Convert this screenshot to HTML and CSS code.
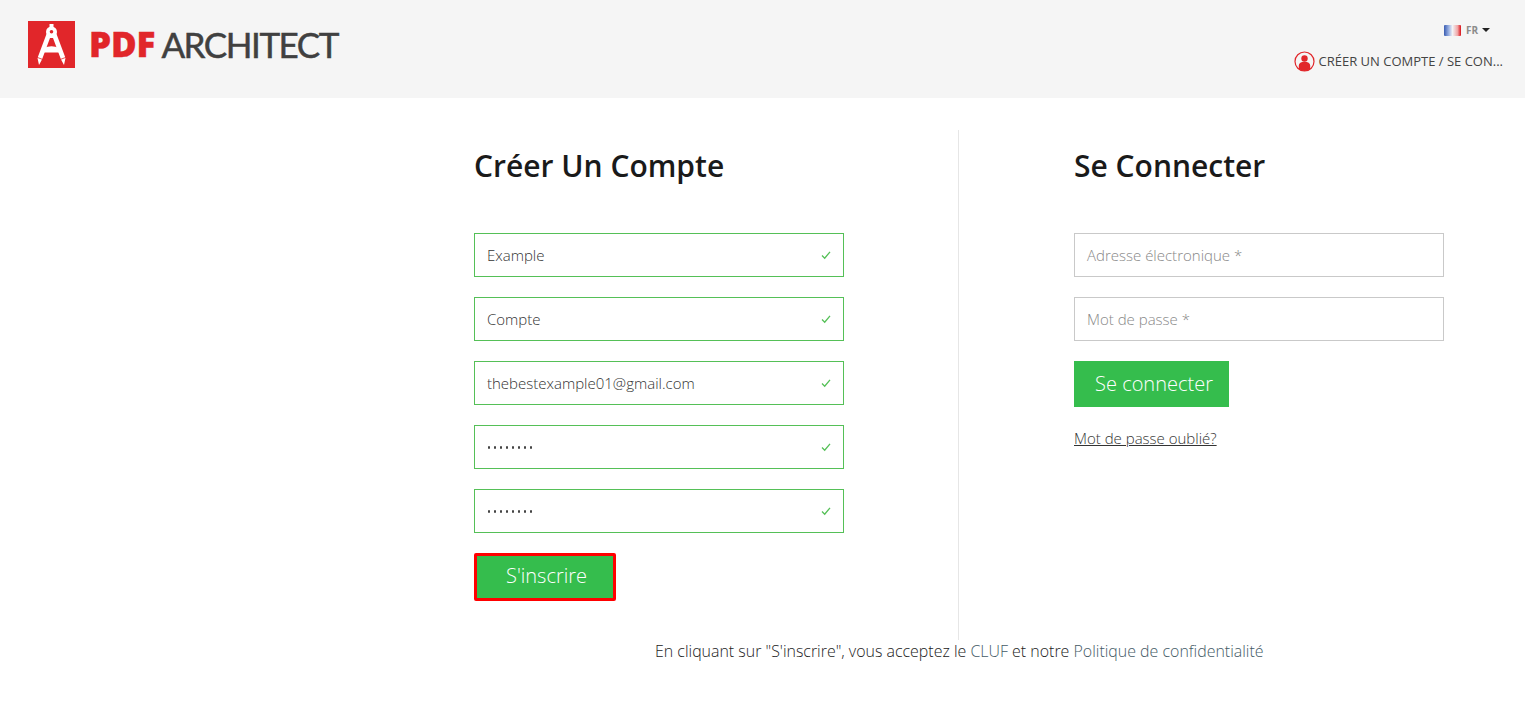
FILE: index.html
```html
<!DOCTYPE html>
<html lang="fr">
<head>
<meta charset="utf-8">
<title>PDF Architect</title>
<link rel="stylesheet" href="styles.css">
</head>
<body>
<header class="header">
  <a class="logo" href="#">
    <svg class="logo-mark" viewBox="0 0 47 47" width="47" height="47" aria-hidden="true">
      <rect width="47" height="47" fill="#e1262a"/>
      <rect x="21.500" y="3" width="4" height="5" fill="#fff"/>
      <path d="M18.500 13L9.500 37l1.500 7 3-5.500L22 17h3l8 21.500 3 5.500 1.500-7-9-24z" fill="#fff"/>
      <circle cx="23.500" cy="11" r="5.500" fill="#fff"/>
      <circle cx="23.500" cy="10.800" r="1.800" fill="#e1262a"/>
      <path d="M16 26.800q7.500-3 15 0l2 4.700H14z" fill="#fff"/>
      <path d="M9 36.300l5.800 2.200M38 36.300l-5.800 2.200" stroke="#e1262a" stroke-width="0.800" fill="none"/>
    </svg>
    <span class="logo-pdf">PDF</span>
    <span class="logo-name">ARCHITECT</span>
  </a>
  <div class="header-right">
    <div class="lang">
      <span class="flag"></span>
      <span class="lang-code">FR</span>
      <span class="caret"></span>
    </div>
    <a class="account" href="#">
      <svg class="account-icon" viewBox="0 0 21 21" width="21" height="21" aria-hidden="true">
        <circle cx="10.500" cy="10.500" r="9.500" fill="none" stroke="#e1262a" stroke-width="1.200"/>
        <circle cx="10.500" cy="7.500" r="3.200" fill="#e1262a"/>
        <path d="M4.800 18v-3.500c0-2.500 2.200-3.800 5.700-3.800s5.700 1.300 5.700 3.800V18a9 9 0 0 1-11.400 0z" fill="#e1262a"/>
      </svg>
      <span class="account-text">CRÉER UN COMPTE / SE CON...</span>
    </a>
  </div>
</header>

<main class="main">
  <section class="col col-left">
    <h1 class="title">Créer Un Compte</h1>
    <form class="form">
      <div class="field valid"><span class="value">Example</span><svg class="check" viewBox="0 0 10 10" width="10" height="10"><path d="M1 5.500l2.700 2.700L9 1.800" fill="none" stroke="#55c057" stroke-width="1.300"/></svg></div>
      <div class="field valid"><span class="value">Compte</span><svg class="check" viewBox="0 0 10 10" width="10" height="10"><path d="M1 5.500l2.700 2.700L9 1.800" fill="none" stroke="#55c057" stroke-width="1.300"/></svg></div>
      <div class="field valid"><span class="value">thebestexample01@gmail.com</span><svg class="check" viewBox="0 0 10 10" width="10" height="10"><path d="M1 5.500l2.700 2.700L9 1.800" fill="none" stroke="#55c057" stroke-width="1.300"/></svg></div>
      <div class="field valid"><span class="dots"><i></i><i></i><i></i><i></i><i></i><i></i><i></i><i></i></span><svg class="check" viewBox="0 0 10 10" width="10" height="10"><path d="M1 5.500l2.700 2.700L9 1.800" fill="none" stroke="#55c057" stroke-width="1.300"/></svg></div>
      <div class="field valid"><span class="dots"><i></i><i></i><i></i><i></i><i></i><i></i><i></i><i></i></span><svg class="check" viewBox="0 0 10 10" width="10" height="10"><path d="M1 5.500l2.700 2.700L9 1.800" fill="none" stroke="#55c057" stroke-width="1.300"/></svg></div>
      <button class="btn btn-focus" type="button">S'inscrire</button>
    </form>
  </section>
  <section class="col col-right">
    <h1 class="title">Se Connecter</h1>
    <form class="form">
      <div class="field"><span class="placeholder">Adresse électronique *</span></div>
      <div class="field"><span class="placeholder">Mot de passe *</span></div>
      <button class="btn btn-login" type="button">Se connecter</button>
      <a class="forgot" href="#">Mot de passe oublié?</a>
    </form>
  </section>
</main>

<p class="legal">En cliquant sur "S'inscrire", vous acceptez le <a href="#">CLUF</a> et notre <a href="#">Politique de confidentialité</a></p>
</body>
</html>
```
FILE: styles.css
```css
* { box-sizing: border-box; }
html, body { margin: 0; padding: 0; }
body {
  background: #fff;
  color: #333;
  font-family: "Open Sans", "Liberation Sans", sans-serif;
  overflow: hidden;
}
a { color: inherit; text-decoration: none; }

.header {
  height: 98px;
  background: #f5f5f5;
  display: flex;
  justify-content: space-between;
  padding: 21px 22px 0 28px;
}
.logo { display: flex; align-items: flex-start; }
.logo-mark { display: block; flex: none; }
.logo-pdf {
  margin: -2px 0 0 14px;
  font: 800 35px/50px "Open Sans", sans-serif;
  color: #e1262a;
  letter-spacing: -0.1px;
  -webkit-text-stroke: 0.4px #e1262a;
}
.logo-name {
  margin: -2px 0 0 6px;
  font: 400 35px/50px Lato, sans-serif;
  color: #404040;
  letter-spacing: -1.45px;
  -webkit-text-stroke: 0.5px #404040;
}
.header-right {
  display: flex;
  flex-direction: column;
  align-items: flex-end;
}
.lang {
  display: flex;
  align-items: center;
  height: 18px;
  padding-right: 13px;
}
.flag {
  width: 17px;
  height: 11px;
  margin-right: 5px;
  border-radius: 1px;
  background: linear-gradient(90deg, #3a5cb0 0, #8fa8de 25%, #f3f3f6 50%, #f0a5a5 80%, #d90f17 100%);
}
.lang-code {
  font-size: 10px;
  font-weight: 700;
  color: #8c8c8c;
  line-height: 18px;
}
.caret {
  width: 0;
  height: 0;
  margin-left: 4px;
  border-left: 4px solid transparent;
  border-right: 4px solid transparent;
  border-top: 4px solid #222;
}
.account {
  display: flex;
  align-items: center;
  margin-top: 11px;
  height: 22px;
}
.account-icon { display: block; margin-right: 4px; }
.account-text { font-size: 13px; color: #444; line-height: 22px; }

.main {
  display: flex;
  margin: 32px 0 0 474px;
  height: 510px;
}
.col-left {
  width: 485px;
  border-right: 1px solid #e6e6e6;
}
.col-right {
  padding-left: 115px;
  width: 485px;
}
.title {
  margin: 16px 0 47px;
  font-size: 30px;
  font-weight: 600;
  line-height: 40px;
  color: #1a1a1a;
}
.form { display: flex; flex-direction: column; align-items: flex-start; }
.field {
  width: 370px;
  height: 44px;
  margin-bottom: 20px;
  padding: 0 12px;
  border: 1px solid #c9c9c9;
  display: flex;
  align-items: center;
  justify-content: space-between;
  font-size: 15px;
  font-weight: 300;
  background: #fff;
}
.field.valid { border-color: #55c057; }
.value { color: #333; }
.placeholder { color: #888; }
.check { display: block; }
.dots { display: flex; gap: 4px; padding-left: 1px; }
.dots i {
  display: block;
  width: 2px;
  height: 3px;
  border-radius: 1px;
  background: #444;
}
.btn {
  border: 0;
  background: #35bd4d;
  color: #fff;
  font-family: inherit;
  font-size: 20px;
  font-weight: 300;
  cursor: pointer;
}
.btn-focus {
  width: 142px;
  height: 48px;
  padding: 0 0 3px 3px;
  border: 3px solid #f00;
  border-radius: 2px;
}
.btn-login {
  width: 155px;
  height: 46px;
  padding: 0 0 2px 5px;
}
.forgot {
  margin-top: 21px;
  font-size: 15px;
  font-weight: 300;
  line-height: 20px;
  color: #333;
  text-decoration: underline;
}
.legal {
  margin: 0 0 0 655px;
  font-size: 15.950px;
  font-weight: 300;
  line-height: 22px;
  color: #222;
  white-space: nowrap;
}
.legal a { color: #445a66; }
```
